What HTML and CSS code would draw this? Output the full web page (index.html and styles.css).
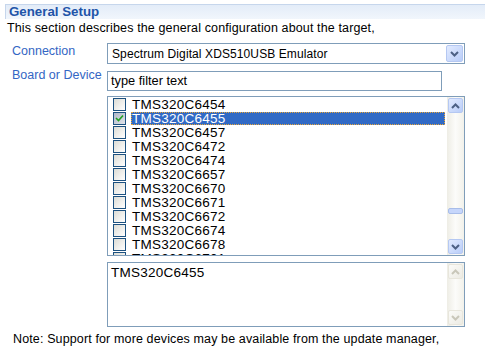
FILE: index.html
```html
<!DOCTYPE html>
<html lang="en">
<head>
    <meta charset="UTF-8">
    <meta name="viewport" content="width=device-width, initial-scale=1.0">
    <title>General Setup</title>
    <link rel="stylesheet" href="styles.css">
</head>
<body>
    <div class="section">
        <div class="section-title">General Setup</div>
        <div class="desc">This section describes the general configuration about the target,</div>
    </div>

    <div class="form">
        <div class="form-row row-connection">
            <label class="label">Connection</label>
            <div class="combo">
                <span class="combo-text">Spectrum Digital XDS510USB Emulator</span>
                <span class="sb-btn">
                    <svg width="9" height="6" viewBox="0 0 9 6"><path d="M1 1 L4.5 4.5 L8 1" fill="none" stroke="#4d6185" stroke-width="2"/></svg>
                </span>
            </div>
        </div>

        <div class="form-row row-board">
            <label class="label">Board or Device</label>
            <div class="filter">type filter text</div>
        </div>

        <div class="form-row">
            <div class="label"></div>
            <div class="controls">
                <div class="listbox">
                    <div class="items">
                        <div class="item"><span class="check"></span><span class="name">TMS320C6454</span></div>
                        <div class="item selected"><span class="check checked">
                            <svg width="9" height="8" viewBox="0 0 9 8"><path d="M1 4 L3.5 6.5 L8 1.5" fill="none" stroke="#21a121" stroke-width="1.6"/></svg>
                        </span><span class="name">TMS320C6455</span></div>
                        <div class="item"><span class="check"></span><span class="name">TMS320C6457</span></div>
                        <div class="item"><span class="check"></span><span class="name">TMS320C6472</span></div>
                        <div class="item"><span class="check"></span><span class="name">TMS320C6474</span></div>
                        <div class="item"><span class="check"></span><span class="name">TMS320C6657</span></div>
                        <div class="item"><span class="check"></span><span class="name">TMS320C6670</span></div>
                        <div class="item"><span class="check"></span><span class="name">TMS320C6671</span></div>
                        <div class="item"><span class="check"></span><span class="name">TMS320C6672</span></div>
                        <div class="item"><span class="check"></span><span class="name">TMS320C6674</span></div>
                        <div class="item"><span class="check"></span><span class="name">TMS320C6678</span></div>
                        <div class="item"><span class="check"></span><span class="name">TMS320C6701</span></div>
                    </div>
                    <div class="vscroll">
                        <span class="sb-btn">
                            <svg width="9" height="6" viewBox="0 0 9 6"><path d="M1 5 L4.5 1.5 L8 5" fill="none" stroke="#4d6185" stroke-width="2"/></svg>
                        </span>
                        <div class="track"><span class="thumb"></span></div>
                        <span class="sb-btn">
                            <svg width="9" height="6" viewBox="0 0 9 6"><path d="M1 1 L4.5 4.5 L8 1" fill="none" stroke="#4d6185" stroke-width="2"/></svg>
                        </span>
                    </div>
                </div>

                <div class="detail">
                    <div class="detail-text">TMS320C6455</div>
                    <div class="vscroll disabled">
                        <span class="sb-btn">
                            <svg width="9" height="6" viewBox="0 0 9 6"><path d="M1 5 L4.5 1.5 L8 5" fill="none" stroke="#c9c7ba" stroke-width="2"/></svg>
                        </span>
                        <div class="track"></div>
                        <span class="sb-btn">
                            <svg width="9" height="6" viewBox="0 0 9 6"><path d="M1 1 L4.5 4.5 L8 1" fill="none" stroke="#c9c7ba" stroke-width="2"/></svg>
                        </span>
                    </div>
                </div>
            </div>
        </div>
    </div>

    <p class="note">Note: Support for more devices may be available from the update manager,</p>
</body>
</html>
```

FILE: styles.css
```css
body {
    margin: 0;
    padding-top: 4px;
    font-family: "Liberation Sans", Arial, sans-serif;
    font-size: 12.5px;
    letter-spacing: 0.13px;
    color: #000;
    background: #fff;
}
.section {
    margin-left: 5px;
}
.section-title {
    height: 14px;
    line-height: 14px;
    padding-left: 3px;
    border-top: 1px solid #c6d6ec;
    border-left: 1px solid #c6d6ec;
    background: linear-gradient(to bottom, #e3ecf8, #f1f6fc);
    font-size: 13.3px;
    font-weight: bold;
    letter-spacing: 0;
    color: #2154a8;
}
.desc {
    margin-top: 2px;
    padding-left: 2px;
    line-height: 14px;
}
.form {
    margin-top: 8px;
    padding-left: 12px;
}
.form-row {
    display: flex;
    align-items: flex-start;
}
.label {
    width: 95px;
    flex: none;
    color: #3466c4;
    line-height: 14px;
    letter-spacing: 0;
}
.row-connection .label {
    padding-top: 1px;
}
.row-board {
    margin-top: 7px;
}
.row-board .label {
    margin-top: -3px;
}
.combo {
    width: 356px;
    height: 19px;
    border: 1px solid #7f9db9;
    display: flex;
    align-items: center;
    justify-content: space-between;
    font-size: 12px;
    letter-spacing: 0.1px;
}
.combo-text {
    padding-left: 4px;
}
.filter {
    width: 330px;
    height: 18px;
    line-height: 18px;
    padding-left: 3px;
    border: 1px solid #7f9db9;
    font-size: 12.8px;
    letter-spacing: 0;
}
.controls {
    margin-top: 5px;
    width: 358px;
}
.listbox {
    height: 158px;
    border: 1px solid #7f9db9;
    display: flex;
    overflow: hidden;
}
.items {
    flex: 1;
    overflow: hidden;
}
.item {
    height: 14px;
    display: flex;
    align-items: center;
}
.check {
    width: 13px;
    height: 13px;
    box-sizing: border-box;
    margin-left: 5px;
    margin-right: 5px;
    border: 1px solid #1c5180;
    background: linear-gradient(135deg, #dcdcd5, #fff);
    display: flex;
    align-items: center;
    justify-content: center;
    flex: none;
}
.check.checked {
    background: linear-gradient(135deg, #b0b8c8, #dfe3ea);
}
.name,
.detail-text {
    font-size: 13.5px;
    letter-spacing: 0.25px;
}
.name {
    flex: 1;
    height: 13px;
    line-height: 13px;
    padding-left: 1px;
}
.item.selected .name {
    background: #316ac5;
    color: #fff;
    outline: 1px dotted #e8a63a;
    outline-offset: -1px;
    margin-right: 2px;
}
.vscroll {
    width: 17px;
    display: flex;
    flex-direction: column;
    background: linear-gradient(to right, #eeede5, #fcfcfa, #f2f1ea);
}
.sb-btn {
    width: 15px;
    height: 15px;
    margin: 1px 0 1px 1px;
    border: 1px solid #b5c8f2;
    border-radius: 2px;
    background: linear-gradient(135deg, #e2ebff, #b9cdf9);
    display: flex;
    align-items: center;
    justify-content: center;
    box-sizing: border-box;
    flex: none;
}
.combo .sb-btn {
    margin: 0 1px 0 0;
    width: 17px;
    height: 17px;
}
.track {
    flex: 1;
}
.thumb {
    display: block;
    height: 6px;
    margin: 94px 0 0 1px;
    width: 15px;
    border: 1px solid #a8bde9;
    border-radius: 2px;
    background: #c6d6fb;
    box-sizing: border-box;
}
.vscroll.disabled .sb-btn {
    border-color: #e8e6dc;
    background: linear-gradient(135deg, #fbfbf8, #ecebe4);
}
.detail {
    margin-top: 6px;
    height: 63px;
    border: 1px solid #7f9db9;
    display: flex;
}
.detail-text {
    flex: 1;
    padding: 3px 0 0 3px;
    line-height: 14px;
}
.note {
    margin: 5px 0 0 13px;
    line-height: 14px;
}
```
